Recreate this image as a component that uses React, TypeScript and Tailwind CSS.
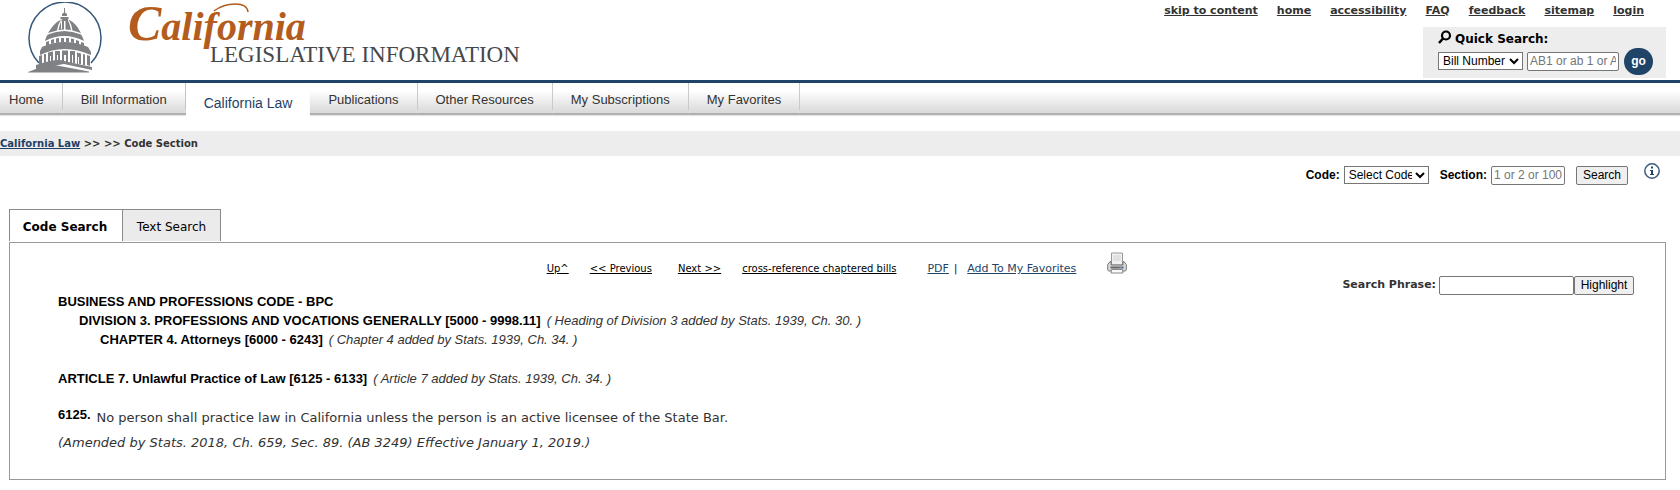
import React from "react";

const verdana = "font-['DejaVu_Sans',sans-serif]";
const field =
  "h-[19px] rounded-[2px] border border-[#767676] bg-white text-[12px] leading-4 text-black placeholder:text-[#757575]";
const dropdown = "h-[18px] border border-[#767676] bg-white px-0 text-[12px] leading-4 text-black";
const pushButton =
  "h-[19px] rounded-[2px] border border-[#767676] bg-[#efefef] text-[12px] leading-4 text-black";

function CapitolLogo() {
  return (
    <svg className="mt-[2px] h-[74px] w-20 shrink-0" viewBox="0 0 80 74" aria-hidden="true">
      <path d="M11 61A36 36 0 1 1 63 61" fill="none" stroke="#35577a" strokeWidth="1.5" />
      <g fill="#808184">
        <path d="M36 6h1v5h-1zM34 12q2.500-3 5 0v2h-5zM32.500 15h8v2h-8z" />
        <path d="M33.500 17.500h1.200v-2h-1.200zM34 17h6v2h-6z" />
        <path d="M34 27V18h-1v9zM20 31Q26 21 33 17.500Q30 22 29 28.500L20 31zM30.500 28Q31.500 22 34 17.500H36V27.500zM37.500 27.500V17.500H39.500Q42 22 43 28zM44.500 28.500Q43.500 22 40.500 17.500Q48 21 53 31z" />
        <path d="M17 39Q18 34 20 32.500Q36 25.500 53 32.500Q55 35 56 39Q36 29 17 39z" />
        <path d="M18 40l3-1v4l-3 1zM23 38l3-1v4l-3 1zM28 36.500l3-.5v4.500l-3 .5zM33 36h3v4.500h-3zM38 36h3v4.500h-3zM43 36.500l3 .5v4l-3-.5zM48 38l3 1v4l-3-1zM53 40l3 1v3l-3-1z" />
        <path d="M14 45Q36 35 60 45L63 50V53Q36 41 12 53V49z" />
        <path d="M11 54l3-1v9l-3 1zM16 52h2v9h-2zM20 50.500l5-1V61h-2v-7h-1v7h-2zM27 49h5v11h-2v-7h-1v7h-2zM34 48.500h6V60h-2v-7h-2v7h-2zM42 49h5v12h-2v-8h-1v8h-2zM49 50.500l4 1V62h-2v-7h-1v7h-1zM55 52l2 .5V63h-2zM59 53l3 1v10l-3-1z" />
        <path d="M8 63Q30 56 36 59L64 65V68L36 62 8 67z" />
        <path d="M0 70L21 62 61 69.500V70.500H0z" />
      </g>
    </svg>
  );
}

function Brand() {
  return (
    <div className="relative h-20 w-[420px] font-['Liberation_Serif',serif]">
      <div className="h-[46px] whitespace-nowrap text-[40px] font-bold italic leading-[46px] text-[#b35c1e] first-letter:text-[50px]">
        California
      </div>
      <div className="absolute left-[82px] top-[45px] whitespace-nowrap text-[23px] leading-5 text-[#47484a]">
        LEGISLATIVE INFORMATION
      </div>
      <svg className="absolute left-0 top-0 h-[72px] w-[140px]" viewBox="0 0 140 72" fill="none" aria-hidden="true">
        <path d="M86 11C98 2 119 1 120 12" stroke="#b35c1e" strokeWidth="1.500" />
      </svg>
    </div>
  );
}

function Printer() {
  return (
    <svg className="h-[22px] w-5" viewBox="0 0 20 22" aria-hidden="true">
      <path d="M4.500 1h11v12h-11z" fill="#f1f1f1" stroke="#999" />
      <path d="M6 4h8M6 6h8M6 8h8" stroke="#d2d2d2" />
      <path d="M3 9.500L.7 12.500v5q0 1.500 1.500 1.500h15.600q1.500 0 1.500-1.500v-5L17 9.500h-1V13H4V9.500z" fill="#d9d9d9" stroke="#777" />
      <path d="M3.500 14.500h13v2h-13z" fill="#666" />
      <path d="M12.500 15.500h2" stroke="#5b9ad0" />
      <path d="M4.500 17.500h11l.5 3.500h-12z" fill="#fafafa" stroke="#888" />
    </svg>
  );
}

const topLinks = ["skip to content", "home", "accessibility", "FAQ", "feedback", "sitemap", "login"];
const navItems = [
  "Home",
  "Bill Information",
  "California Law",
  "Publications",
  "Other Resources",
  "My Subscriptions",
  "My Favorites",
];

export default function App() {
  return (
    <div className="bg-white font-['Liberation_Sans',sans-serif] text-[#333]">
      <header className="flex h-20 justify-between">
        <div className="flex pl-7">
          <CapitolLogo />
          <div className="pl-5">
            <Brand />
          </div>
        </div>
        <div className="flex flex-col items-end pr-[14px]">
          <nav className={`flex gap-[19px] pr-[22px] text-[11px] font-bold leading-[22px] ${verdana}`}>
            {topLinks.map((t) => (
              <a key={t} href="#" className="underline">
                {t}
              </a>
            ))}
          </nav>
          <form className="mt-[5px] h-[51px] w-[243px] bg-[#ededed] pl-[15px] text-black">
            <div className="flex h-5 items-center gap-[3px]">
              <svg className="h-[14px] w-[14px]" viewBox="0 0 14 14" aria-hidden="true">
                <circle cx="8" cy="5.500" r="4" fill="none" stroke="#000" strokeWidth="2.200" />
                <path d="M5 8.500L1 13" stroke="#000" strokeWidth="2.500" />
              </svg>
              <label htmlFor="quick" className={`pt-1 text-[12px] font-bold leading-4 ${verdana}`}>
                Quick Search:
              </label>
            </div>
            <div className="flex h-7 items-center">
              <select aria-label="Search type" className={`w-[85px] ${dropdown}`}>
                <option>Bill Number</option>
              </select>
              <input id="quick" placeholder="AB1 or ab 1 or A" className={`ml-1 w-[92px] px-[2px] ${field}`} />
              <button
                type="button"
                className="ml-[5px] h-[27px] w-[29px] rounded-full bg-[#1f4468] text-[12px] font-bold leading-4 text-white"
              >
                go
              </button>
            </div>
          </form>
        </div>
      </header>

      <nav className="flex h-9 border-t-[3px] border-[#1f4468] text-[13px]">
        {navItems.map((t) =>
          t === "California Law" ? (
            <a key={t} href="#" className="bg-white px-[18px] pt-3 text-[14px] leading-4 text-[#1f3f66]">
              {t}
            </a>
          ) : (
            <div
              key={t}
              className="h-8 border-b-2 border-[#b0b0b0] bg-linear-to-b from-white from-25% to-[#d9d9d9] shadow-[0_1px_1px_#e5e5e5]"
            >
              <a
                href="#"
                className={`block h-[27px] border-r border-[#c4c4c4] pr-[18px] pt-2 leading-[18px] ${
                  t === "Home" ? "pl-[9px]" : "pl-[18px]"
                }`}
              >
                {t}
              </a>
            </div>
          ),
        )}
        <div className="h-8 flex-1 border-b-2 border-[#b0b0b0] bg-linear-to-b from-white from-25% to-[#d9d9d9] shadow-[0_1px_1px_#e5e5e5]" />
      </nav>

      <div className={`mt-[15px] h-[25px] bg-[#ededed] text-[10px] font-bold leading-[26px] ${verdana}`}>
        <a href="#" className="text-[#1f3f66] underline">
          California Law
        </a>{" "}
        &gt;&gt; &gt;&gt; Code Section
      </div>

      <form className="flex h-[38px] items-center justify-end pr-5 text-[12px] font-bold text-black">
        <label htmlFor="code">Code:</label>
        <select id="code" className={`ml-1 w-[85px] font-normal ${dropdown}`}>
          <option>Select Code</option>
        </select>
        <label htmlFor="section" className="ml-[11px]">
          Section:
        </label>
        <input id="section" placeholder="1 or 2 or 100" className={`ml-1 w-[74px] px-[2px] font-normal ${field}`} />
        <button type="button" className={`ml-[11px] w-[52px] font-normal ${pushButton}`}>
          Search
        </button>
        <svg className="mb-2 ml-4 h-4 w-4" viewBox="0 0 16 16" role="img" aria-label="Help">
          <circle cx="8" cy="8" r="7.200" fill="none" stroke="#3b5b80" strokeWidth="1.500" />
          <path d="M7 3.500h2v2H7zM6 7h3v4h1v1H6v-1h1V8H6z" fill="#1f4468" />
        </svg>
      </form>

      <main className={`mx-[9px] mr-[14px] mt-[15px] ${verdana}`}>
        <div className="flex h-8 text-[12px] text-black">
          <button type="button" className="w-[113px] border-l border-t border-[#8a8a8a] pl-1 pr-[6px] pt-[2px] font-bold">
            Code Search
          </button>
          <button type="button" className="w-[99px] border border-b-0 border-[#8a8a8a] bg-[#ebebeb] pt-[2px]">
            Text Search
          </button>
        </div>
        <section className="mt-px border border-[#999] pb-[27px]">
          <div className="flex h-[35px] items-end justify-center pr-px text-[10px] leading-[18px] text-black">
            <a href="#" className="underline">Up^</a>
            <a href="#" className="ml-[21px] underline">&lt;&lt; Previous</a>
            <a href="#" className="ml-[26px] underline">Next &gt;&gt;</a>
            <a href="#" className="ml-[21px] underline">cross-reference chaptered bills</a>
            <a href="#" className="ml-[31px] text-[11px] text-[#1f4468] underline">PDF</a>
            <span className="ml-[5px]">|</span>
            <a href="#" className="ml-[10px] text-[11px] text-[#1f4468] underline">Add To My Favorites</a>
            <a href="#" aria-label="Print" className="mb-1 ml-[31px]">
              <Printer />
            </a>
          </div>
          <form className="flex h-[14px] items-center justify-end pr-[31px] font-['Liberation_Sans',sans-serif]">
            <label htmlFor="phrase" className={`text-[11px] font-bold ${verdana}`}>
              Search Phrase:
            </label>
            <input id="phrase" className={`ml-[3px] w-[135px] px-[3px] ${field}`} />
            <button type="button" className={`w-[60px] ${pushButton}`}>
              Highlight
            </button>
          </form>
          <div className="pl-12 font-['Liberation_Sans',sans-serif] text-[13px] leading-[19px]">
            <p>
              <b className="text-black">BUSINESS AND PROFESSIONS CODE - BPC</b>
            </p>
            <p className="pl-[21px]">
              <b className="text-black">DIVISION 3. PROFESSIONS AND VOCATIONS GENERALLY [5000 - 9998.11]</b>
              <i className="ml-[6px]">( Heading of Division 3 added by Stats. 1939, Ch. 30. )</i>
            </p>
            <p className="pl-[42px]">
              <b className="text-black">CHAPTER 4. Attorneys [6000 - 6243]</b>
              <i className="ml-[6px]">( Chapter 4 added by Stats. 1939, Ch. 34. )</i>
            </p>
            <p className="mt-5">
              <b className="text-black">ARTICLE 7. Unlawful Practice of Law [6125 - 6133]</b>
              <i className="ml-[6px]">( Article 7 added by Stats. 1939, Ch. 34. )</i>
            </p>
            <div className="mt-[17px] flex">
              <b className="text-black">6125.</b>
              <p className={`ml-[6px] pt-[3px] ${verdana}`}>
                No person shall practice law in California unless the person is an active licensee of the State Bar.
              </p>
            </div>
            <p className={`mt-[6px] italic ${verdana}`}>
              (Amended by Stats. 2018, Ch. 659, Sec. 89. (AB 3249) Effective January 1, 2019.)
            </p>
          </div>
        </section>
      </main>
    </div>
  );
}
